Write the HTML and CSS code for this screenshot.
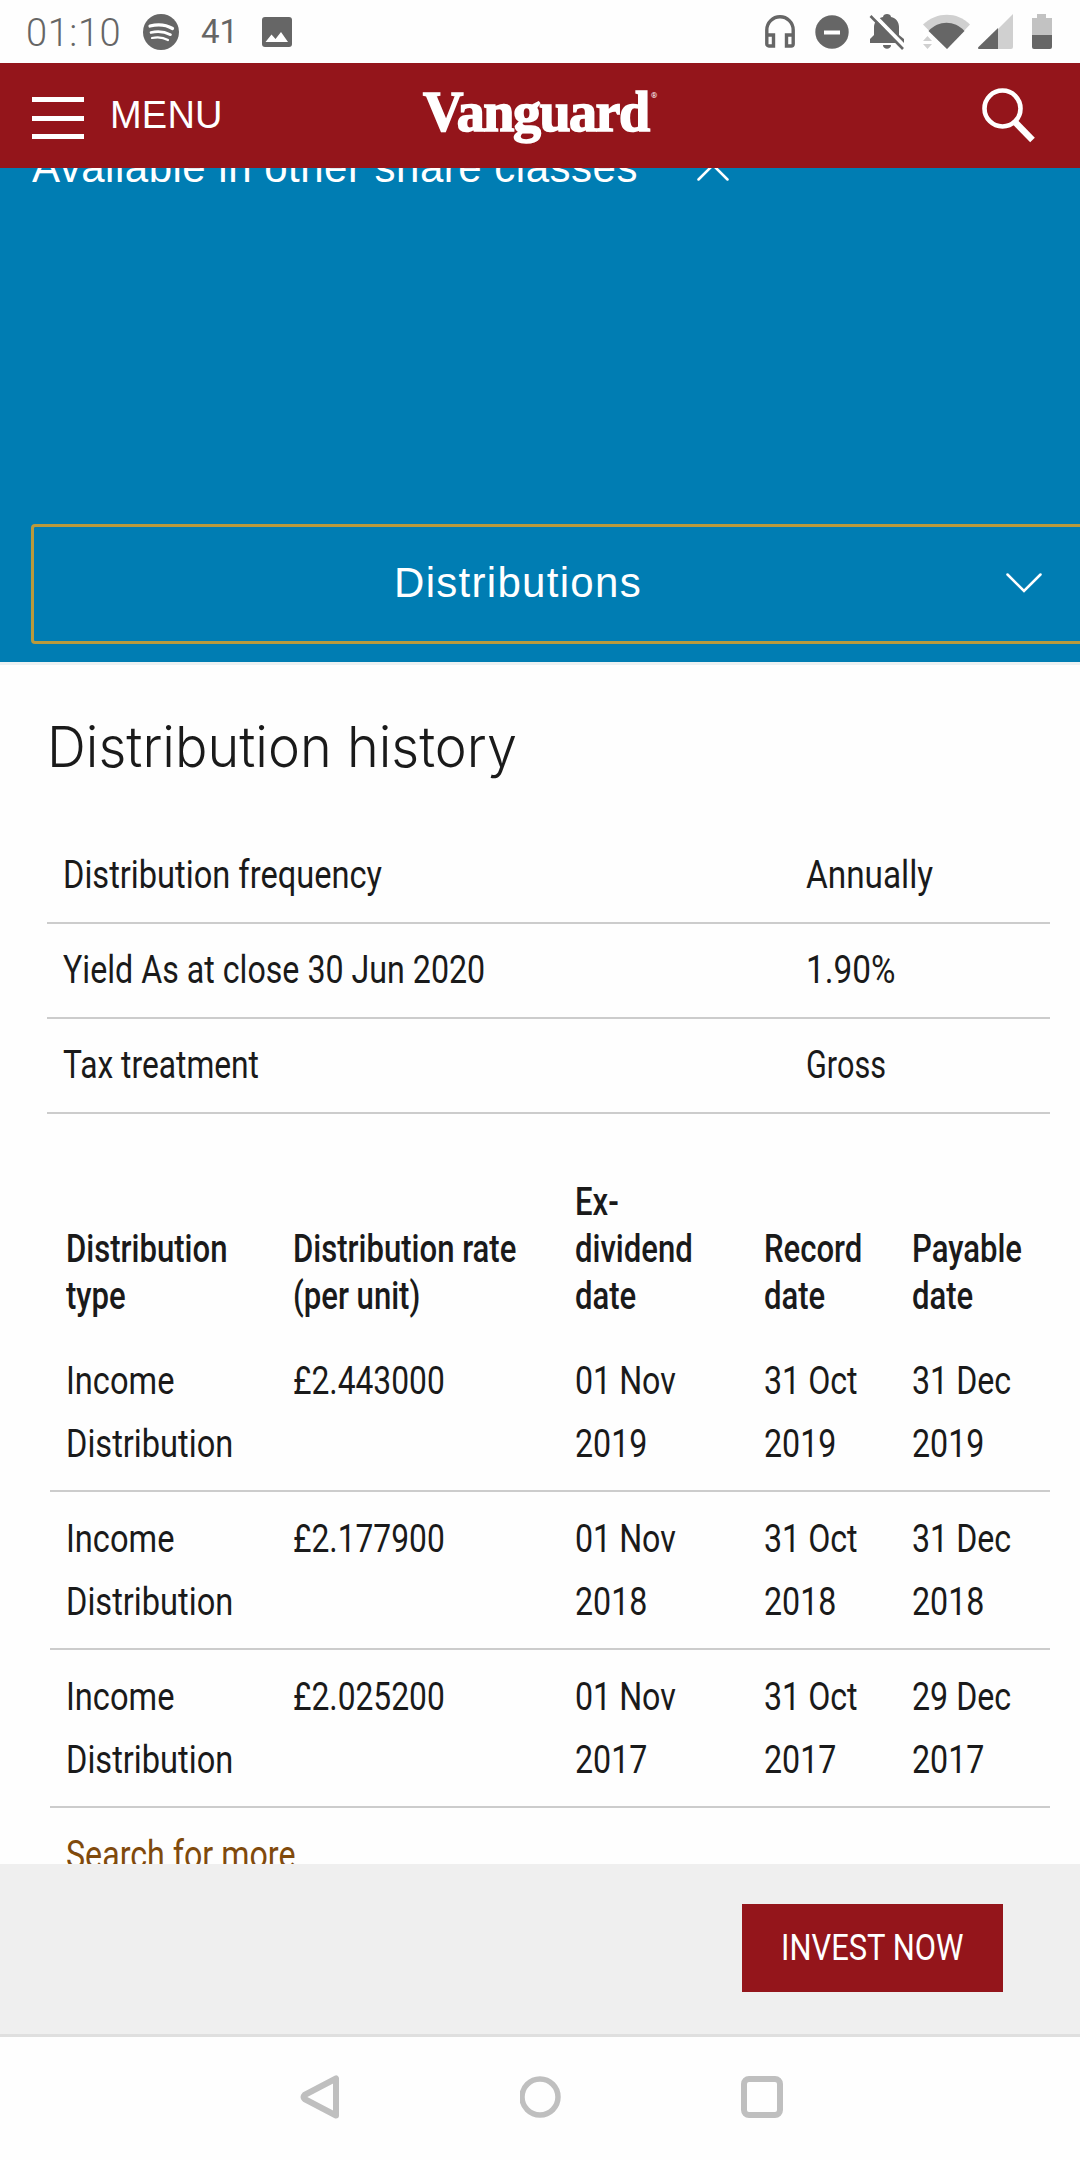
FILE: index.html
```html
<!DOCTYPE html>
<html lang="en">
<head>
    <meta charset="UTF-8">
    <title>Vanguard - Distributions</title>
    <link rel="stylesheet" href="styles.css">
</head>
<body>
    <div class="status-bar">
        <span class="clock">01:10</span>
        <svg class="icon-spotify" width="36" height="36" viewBox="0 0 36 36">
            <circle cx="18" cy="18" r="18" fill="#666"/>
            <g fill="none" stroke="#fff" stroke-linecap="round">
                <path d="M7 12c8-2 16-1.300 22.500 2.500" stroke-width="3.200"/>
                <path d="M8 18.500c7-1.800 13.500-1 19.500 2.200" stroke-width="2.700"/>
                <path d="M9 24c6-1.300 11-.8 16 2" stroke-width="2.200"/>
            </g>
        </svg>
        <span class="count">41</span>
        <svg class="icon-image" width="30" height="30" viewBox="0 0 30 30">
            <rect width="30" height="30" rx="3" fill="#666"/>
            <path d="M3.500 25l6-7.500 4 4.500 5.500-7 7 10z" fill="#fff"/>
        </svg>
        <div class="status-right">
            <svg width="30" height="33" viewBox="0 0 30 33">
                <path d="M1.800 29V15a13.200 13.200 0 0 1 26.400 0v14a2 2 0 0 1-2 2h-4.700V20h6.700M1.800 20h6.700v11H3.800a2 2 0 0 1-2-2" fill="none" stroke="#666" stroke-width="3.400"/>
            </svg>
            <svg class="icon-dnd" width="34" height="34" viewBox="0 0 34 34">
                <circle cx="17" cy="17" r="16.700" fill="#666"/>
                <path d="M9 17.500h16" stroke="#fff" stroke-width="4"/>
            </svg>
            <svg class="icon-bell" width="36" height="36" viewBox="0 0 36 36">
                <path d="M1 29v-4l4-4v-8C5 8 9 4 14 3c0-4 8-4 8 0 5 1 8 5 8 10v8l5 4v4z" fill="#666"/>
                <path d="M14 31h8c0 5-8 5-8 0z" fill="#666"/>
                <path d="M4 0l33 34" stroke="#fff" stroke-width="4"/>
                <path d="M1.500 2l32.500 33" stroke="#666" stroke-width="2.600"/>
            </svg>
            <svg class="icon-wifi" width="48" height="36" viewBox="0 0 48 36">
                <path d="M0 10.500C14-2.500 34-2.500 47 10.500L24 35z" fill="#d0d0d0"/>
                <path d="M0 17h10v19H0z" fill="#fff"/>
                <path d="M5.500 17c10-11 26-11 36 0L24 35z" fill="#666"/>
                <path d="M0 27l4.500-5 4.500 5zM0 30l4.500 5 4.500-5z" fill="#d0d0d0"/>
            </svg>
            <svg class="icon-signal" width="35" height="36" viewBox="0 0 35 36">
                <path d="M35 0v33a2 2 0 0 1-2 2H0z" fill="#d0d0d0"/>
                <path d="M20 14v21H1.500c-1.500 0-2-1-1-2z" fill="#666"/>
            </svg>
            <svg class="icon-battery" width="20" height="35" viewBox="0 0 20 35">
                <path d="M5 0h9v4h6v18H0V4h5z" fill="#c2c2c2"/>
                <path d="M0 21h20v12a2 2 0 0 1-2 2H2a2 2 0 0 1-2-2z" fill="#666"/>
            </svg>
        </div>
    </div>

    <header class="site-header">
        <div class="menu-btn">
            <div class="bars"><i></i><i></i><i></i></div>
            <span class="menu-label">MENU</span>
        </div>
        <div class="logo"><span class="logo-text">Vanguard</span><sup>®</sup></div>
        <svg class="icon-search" width="54" height="56" viewBox="0 0 54 56">
            <circle cx="20.500" cy="20.500" r="18" fill="none" stroke="#fff" stroke-width="4.600"/>
            <path d="M33 34l17.500 18" stroke="#fff" stroke-width="6.500"/>
        </svg>
    </header>

    <section class="fund-bar">
        <div class="share-classes">
            <span class="share-label">Available in other share classes</span>
            <svg width="32" height="18" viewBox="0 0 32 18"><path d="M1.500 16.500L16 2l14.500 14.500" fill="none" stroke="#fff" stroke-width="2.500" stroke-linecap="round"/></svg>
        </div>
        <div class="section-select">
            <span class="section-label">Distributions</span>
            <svg width="36" height="20" viewBox="0 0 36 20"><path d="M1.500 1.500L18 18 34.500 1.500" fill="none" stroke="#fff" stroke-width="2.500" stroke-linecap="round"/></svg>
        </div>
    </section>

    <main class="content">
        <h1><span>Distribution history</span></h1>

        <div class="summary">
            <div class="summary-row"><span class="cond label">Distribution frequency</span><span class="cond wide">Annually</span></div>
            <div class="summary-row"><span class="cond">Yield As at close 30 Jun 2020</span><span class="cond wide">1.90%</span></div>
            <div class="summary-row"><span class="cond num">Tax treatment</span><span class="cond tight">Gross</span></div>
        </div>

        <div class="history">
            <div class="history-head">
                <span class="cond">Distribution<br>type</span>
                <span class="cond">Distribution rate<br>(per unit)</span>
                <span class="cond">Ex-<br>dividend<br>date</span>
                <span class="cond">Record<br>date</span>
                <span class="cond">Payable<br>date</span>
            </div>
            <div class="history-row">
                <span class="cond label">Income<br>Distribution</span>
                <span class="cond num">£2.443000</span>
                <span class="cond">01 Nov<br>2019</span>
                <span class="cond">31 Oct<br>2019</span>
                <span class="cond">31 Dec<br>2019</span>
            </div>
            <div class="history-row">
                <span class="cond label">Income<br>Distribution</span>
                <span class="cond num">£2.177900</span>
                <span class="cond">01 Nov<br>2018</span>
                <span class="cond">31 Oct<br>2018</span>
                <span class="cond">31 Dec<br>2018</span>
            </div>
            <div class="history-row">
                <span class="cond label">Income<br>Distribution</span>
                <span class="cond num">£2.025200</span>
                <span class="cond">01 Nov<br>2017</span>
                <span class="cond">31 Oct<br>2017</span>
                <span class="cond">29 Dec<br>2017</span>
            </div>
            <a class="more-link"><span class="cond">Search for more</span></a>
        </div>
    </main>

    <footer class="invest-bar">
        <div class="invest-btn"><span class="cond label">INVEST NOW</span></div>
    </footer>

    <nav class="nav-bar">
        <svg width="40" height="44" viewBox="0 0 40 44"><path d="M36 3.500v37L4.500 24q-2-2 0-4z" fill="none" stroke="#bfbfbf" stroke-width="6" stroke-linejoin="round"/></svg>
        <svg width="42" height="42" viewBox="0 0 42 42"><circle cx="20" cy="21" r="18" fill="none" stroke="#bfbfbf" stroke-width="5.500"/></svg>
        <svg width="42" height="42" viewBox="0 0 42 42"><rect x="3" y="3" width="36" height="36" rx="5" fill="none" stroke="#bfbfbf" stroke-width="6"/></svg>
    </nav>
</body>
</html>
```
FILE: styles.css
```css
* {
    box-sizing: border-box;
}

body {
    margin: 0;
    width: 1080px;
    height: 2160px;
    overflow: hidden;
    display: flex;
    flex-direction: column;
    background: #fefefe;
    color: #1a1a1a;
    font-family: Roboto, "Liberation Sans", sans-serif;
}

svg {
    display: block;
    flex: none;
}

/* condensed text */
.cond {
    display: block;
    white-space: nowrap;
    transform: scaleX(0.825);
    transform-origin: left center;
}

.cond.label {
    transform: scaleX(0.836);
}

.cond.num {
    transform: scaleX(0.814);
}

.cond.wide {
    transform: scaleX(0.855);
}

.cond.tight {
    transform: scaleX(0.785);
}

/* status bar */
.status-bar {
    flex: none;
    height: 63px;
    display: flex;
    align-items: center;
    padding: 0 28px 0 26px;
    color: #666;
}

.clock {
    width: 117px;
    font-size: 38px;
    font-weight: 350;
    letter-spacing: 0.6px;
    padding-top: 2px;
}

.count {
    width: 61px;
    margin-left: 22px;
    font-size: 33px;
}

.status-right {
    display: flex;
    margin-left: auto;
    align-items: center;
}

.icon-dnd {
    margin-left: 20px;
}

.icon-bell {
    margin-left: 20px;
}

.icon-wifi {
    margin-left: 18px;
}

.icon-signal {
    margin-left: 7px;
}

.icon-battery {
    margin-left: 19px;
}

/* red header */
.site-header {
    flex: none;
    position: relative;
    z-index: 2;
    height: 105px;
    display: grid;
    grid-template-columns: 391px 1fr 54px;
    align-items: center;
    padding: 0 44px 0 32px;
    background: #94151b;
    color: #fff;
}

.menu-btn {
    display: flex;
    align-items: center;
    gap: 26px;
}

.bars {
    width: 52px;
    height: 42px;
    display: flex;
    flex-direction: column;
    justify-content: space-between;
    margin-top: 5px;
}

.bars i {
    height: 5px;
    background: #fff;
}

.menu-label {
    font-family: "Liberation Sans", sans-serif;
    font-size: 38px;
    letter-spacing: 0.2px;
}

.logo {
    display: flex;
    align-items: flex-start;
    margin-top: -7px;
}

.logo-text {
    width: 228px;
    white-space: nowrap;
    font-family: "Liberation Serif", serif;
    font-weight: bold;
    font-size: 56px;
    line-height: 60px;
    letter-spacing: -1.5px;
    -webkit-text-stroke: 1.6px #fff;
}

.logo sup {
    font-size: 8px;
    line-height: 12px;
    padding-top: 8px;
}

/* blue panel */
.fund-bar {
    flex: none;
    height: 497px;
    background: #007db3;
    border-bottom: 3px solid #ecf1f2;
    color: #fff;
    font-family: "Liberation Sans", sans-serif;
    font-size: 42px;
}

.share-classes {
    display: flex;
    align-items: center;
    gap: 60px;
    height: 48px;
    margin-top: -24px;
    padding-left: 32px;
    line-height: 48px;
}

.share-classes svg {
    margin-top: 7px;
}

.share-label {
    width: 605px;
    white-space: nowrap;
    letter-spacing: 0.5px;
}

.section-select {
    display: flex;
    align-items: center;
    height: 120px;
    margin: 332px 0 0 31px;
    padding: 0 38px 2px 0;
    border: 3px solid #b99a3c;
    border-right: 0;
    border-radius: 4px 0 0 4px;
}

.section-label {
    margin: 0 auto 0 360px;
    letter-spacing: 1.3px;
}

/* content */
.content {
    flex: none;
    height: 1199px;
    overflow: hidden;
}

h1 {
    margin: 46px 0 0 47px;
    font-family: Inter, sans-serif;
    font-weight: 300;
    font-size: 56px;
    line-height: 72px;
}

h1 span {
    display: inline-block;
    transform: scaleX(0.964);
    transform-origin: left center;
}

.summary {
    margin: 46px 30px 0 47px;
    font-size: 39px;
}

.summary-row {
    display: grid;
    grid-template-columns: 743px 1fr;
    height: 95px;
    padding-left: 16px;
    line-height: 93px;
    border-bottom: 2px solid #ccc;
}

.history {
    margin: 65px 30px 0 50px;
    font-size: 39px;
}

.history-head,
.history-row {
    display: grid;
    grid-template-columns: 227px 282px 189px 148px 1fr;
    padding-left: 16px;
}

.history-head {
    align-items: end;
    height: 155px;
    padding-bottom: 14px;
    font-size: 38px;
    font-weight: 500;
    line-height: 47px;
}

.history-head .cond {
    transform: scaleX(0.818);
}

.history-row {
    height: 158px;
    padding-top: 16px;
    line-height: 63px;
    border-bottom: 2px solid #ccc;
}

.more-link {
    display: block;
    padding: 16px 0 0 16px;
    line-height: 63px;
    color: #804a0c;
}

/* invest footer */
.invest-bar {
    flex: none;
    height: 173px;
    display: flex;
    justify-content: flex-end;
    padding: 40px 77px 0 0;
    background: #efefef;
    border-bottom: 3px solid #dfdfdf;
}

.invest-btn {
    width: 261px;
    height: 88px;
    padding-left: 39px;
    background: #94151b;
    color: #fff;
    font-size: 37px;
    line-height: 88px;
}

/* android navigation */
.nav-bar {
    flex: 1;
    display: flex;
    justify-content: space-between;
    align-items: center;
    padding: 0 297px 3px 300px;
}
```
